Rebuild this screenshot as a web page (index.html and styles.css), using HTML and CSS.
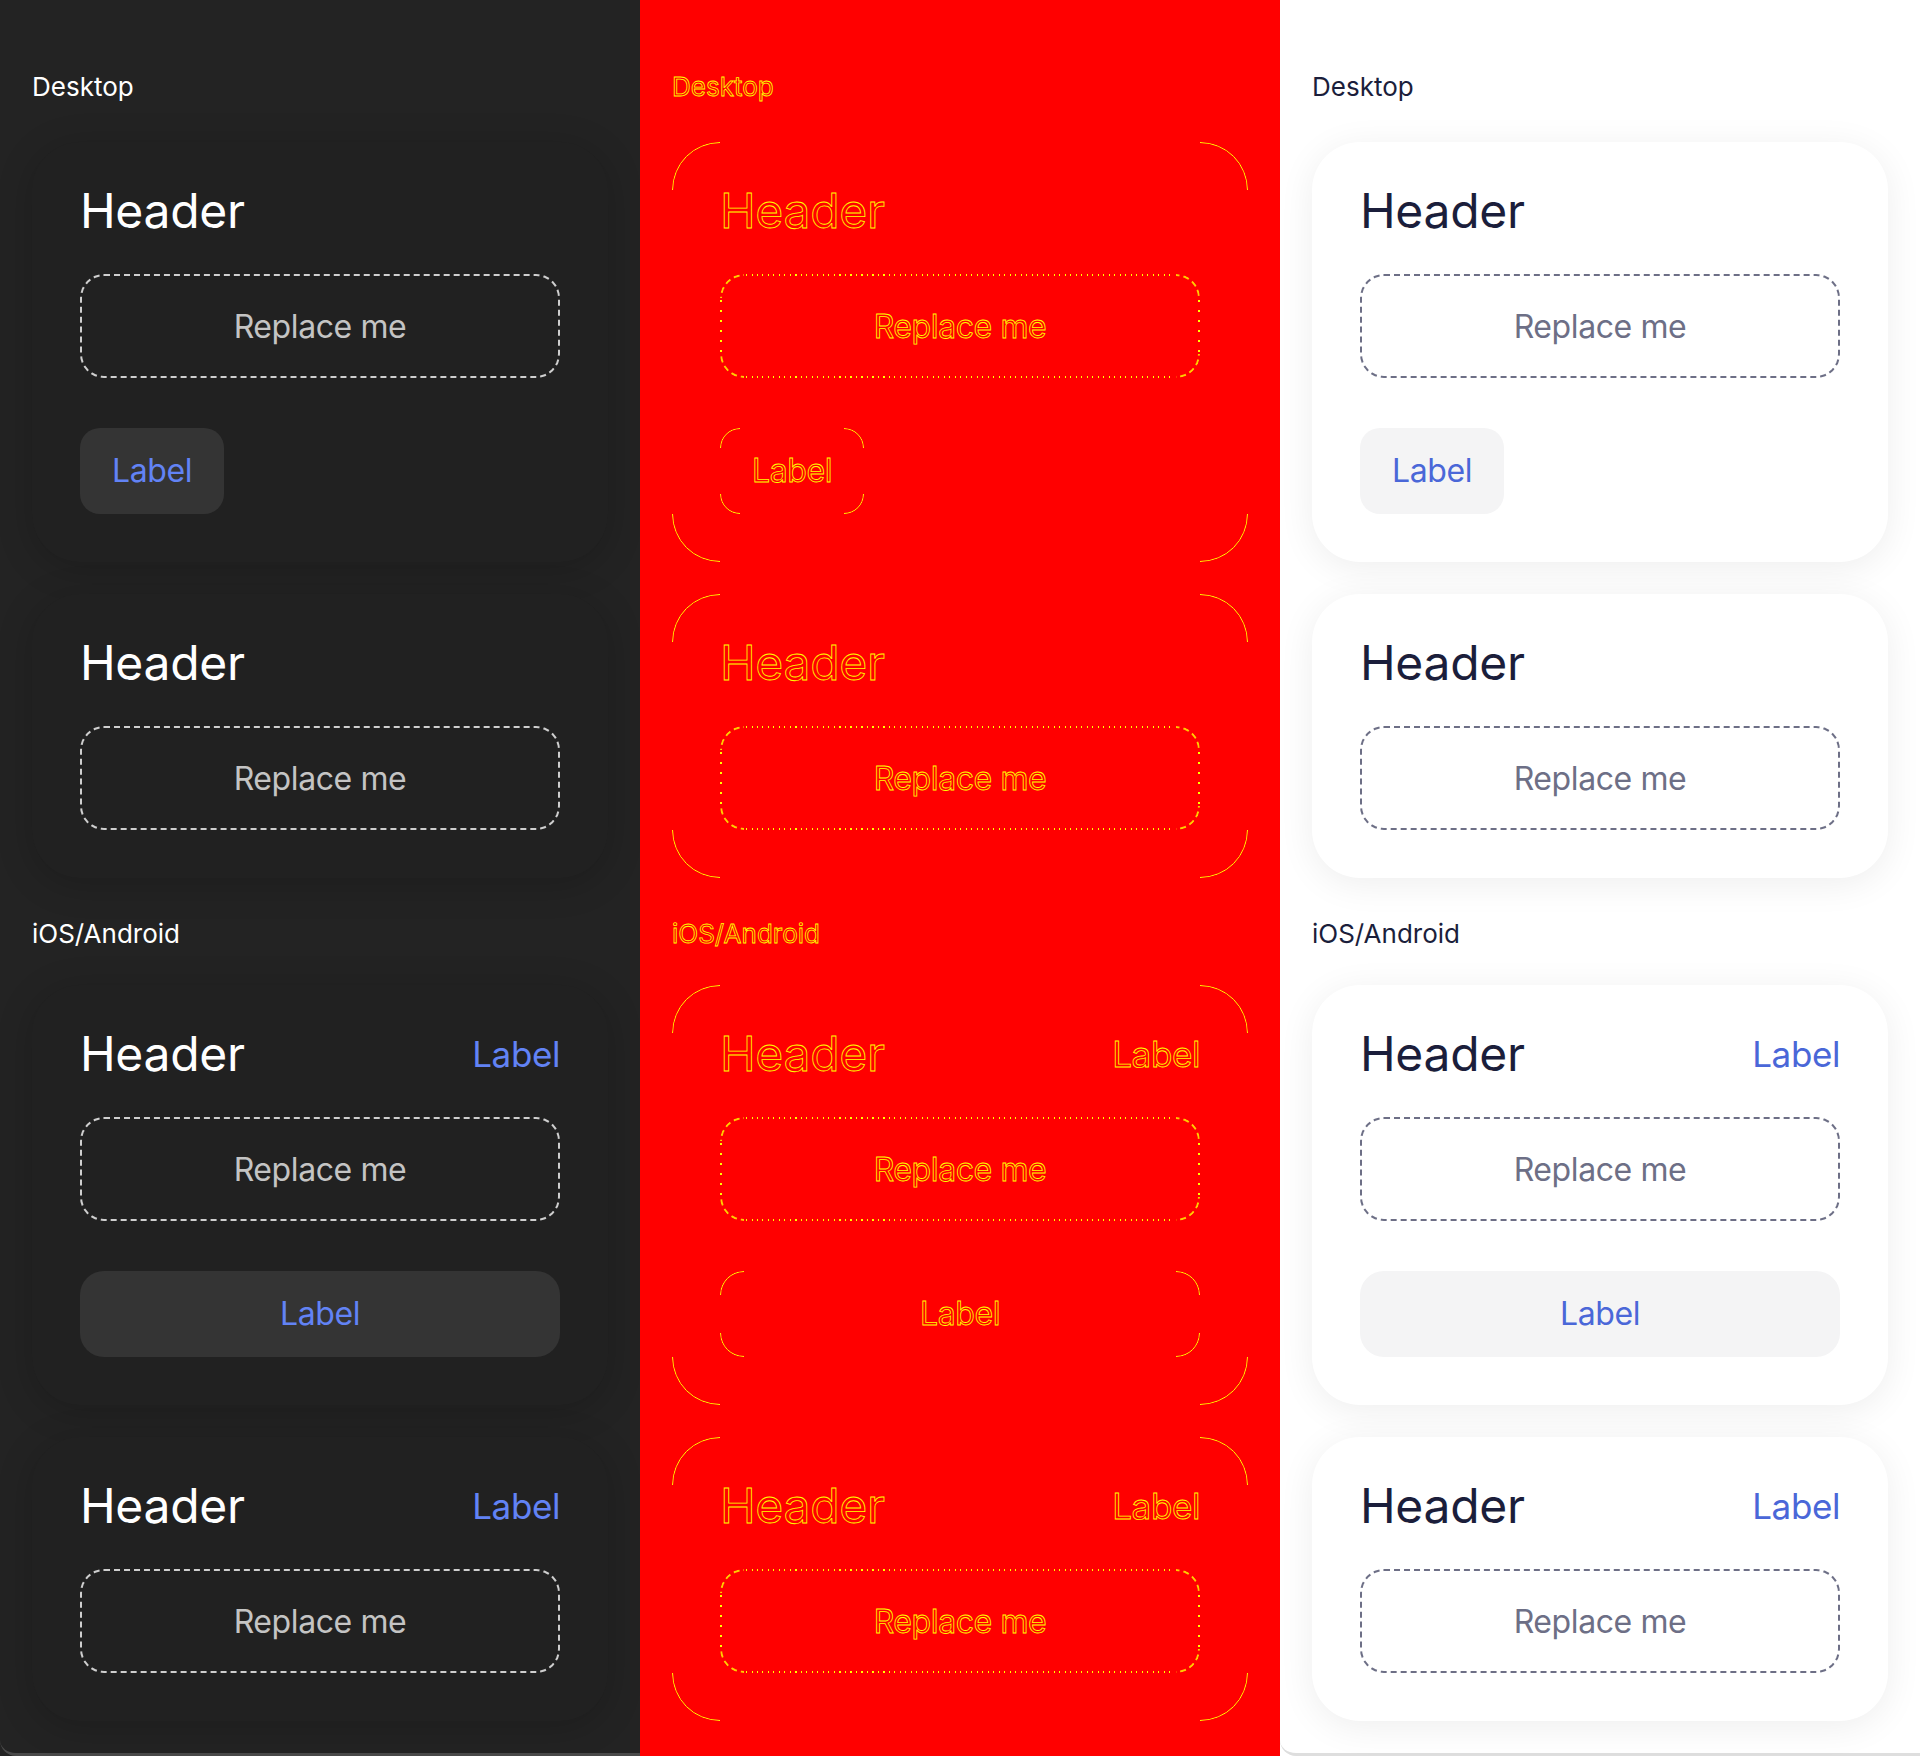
FILE: index.html
```html
<!DOCTYPE html>
<html lang="en">
<head>
<meta charset="utf-8">
<title>Cards</title>
<link rel="stylesheet" href="styles.css">
</head>
<body>
<div class="page">
  <div class="col col-dark">
    <div class="panel">
      <section class="section">
        <div class="section-title">Desktop</div>
        <div class="card">
          <div class="card-head"><span class="card-title">Header</span></div>
          <div class="slot"><span>Replace me</span></div>
          <div class="btn"><span>Label</span></div>
        </div>
        <div class="card">
          <div class="card-head"><span class="card-title">Header</span></div>
          <div class="slot"><span>Replace me</span></div>
        </div>
      </section>
      <section class="section section-mobile">
        <div class="section-title">iOS/Android</div>
        <div class="card">
          <div class="card-head"><span class="card-title">Header</span><span class="link">Label</span></div>
          <div class="slot"><span>Replace me</span></div>
          <div class="btn btn-wide"><span>Label</span></div>
        </div>
        <div class="card">
          <div class="card-head"><span class="card-title">Header</span><span class="link">Label</span></div>
          <div class="slot"><span>Replace me</span></div>
        </div>
      </section>
    </div>
  </div>

  <div class="col col-red">
    <div class="panel">
      <section class="section">
        <div class="section-title">Desktop</div>
        <div class="card">
          <div class="card-head"><span class="card-title">Header</span></div>
          <div class="slot"><span>Replace me</span></div>
          <div class="btn"><span>Label</span></div>
        </div>
        <div class="card">
          <div class="card-head"><span class="card-title">Header</span></div>
          <div class="slot"><span>Replace me</span></div>
        </div>
      </section>
      <section class="section section-mobile">
        <div class="section-title">iOS/Android</div>
        <div class="card">
          <div class="card-head"><span class="card-title">Header</span><span class="link">Label</span></div>
          <div class="slot"><span>Replace me</span></div>
          <div class="btn btn-wide"><span>Label</span></div>
        </div>
        <div class="card">
          <div class="card-head"><span class="card-title">Header</span><span class="link">Label</span></div>
          <div class="slot"><span>Replace me</span></div>
        </div>
      </section>
    </div>
  </div>

  <div class="col col-light">
    <div class="panel">
      <section class="section">
        <div class="section-title">Desktop</div>
        <div class="card">
          <div class="card-head"><span class="card-title">Header</span></div>
          <div class="slot"><span>Replace me</span></div>
          <div class="btn"><span>Label</span></div>
        </div>
        <div class="card">
          <div class="card-head"><span class="card-title">Header</span></div>
          <div class="slot"><span>Replace me</span></div>
        </div>
      </section>
      <section class="section section-mobile">
        <div class="section-title">iOS/Android</div>
        <div class="card">
          <div class="card-head"><span class="card-title">Header</span><span class="link">Label</span></div>
          <div class="slot"><span>Replace me</span></div>
          <div class="btn btn-wide"><span>Label</span></div>
        </div>
        <div class="card">
          <div class="card-head"><span class="card-title">Header</span><span class="link">Label</span></div>
          <div class="slot"><span>Replace me</span></div>
        </div>
      </section>
    </div>
  </div>
</div>
</body>
</html>
```

FILE: styles.css
```css
* { box-sizing: border-box; }

html, body {
  margin: 0;
  padding: 0;
}

body {
  width: 1920px;
  height: 1756px;
  overflow: hidden;
  font-family: Inter, "Noto Sans", sans-serif;
  background: #e6e6e6;
}

.page {
  display: grid;
  grid-template-columns: repeat(3, 640px);
  height: 1756px;
}

.col {
  height: 1756px;
}

.panel {
  height: 1756px;
  padding: 71px 32px 0;
  display: flex;
  flex-direction: column;
  gap: 40px;
  border-bottom: 3px solid transparent;
  border-bottom-left-radius: 16px;
}

.section {
  display: flex;
  flex-direction: column;
  gap: 32px;
}

.section-title {
  font-size: 26px;
  line-height: 32px;
  margin-bottom: 7px;
}

.section-mobile .section-title {
  margin-bottom: 3px;
}

.card {
  border-radius: 48px;
  padding: 40px 48px 48px;
  display: flex;
  flex-direction: column;
}

.card-head {
  display: flex;
  justify-content: space-between;
  align-items: center;
  height: 58px;
}

.card-title {
  font-size: 48px;
  line-height: 58px;
  letter-spacing: -0.3px;
}

.link {
  font-size: 35px;
  line-height: 42px;
  letter-spacing: -0.4px;
}

.slot {
  position: relative;
  margin-top: 34px;
  height: 104px;
  border: 2px dashed;
  border-radius: 24px;
  display: flex;
  align-items: center;
  justify-content: center;
  font-size: 32px;
  letter-spacing: -0.4px;
}

.btn {
  position: relative;
  margin-top: 50px;
  align-self: flex-start;
  padding: 24px 32px;
  border-radius: 20px;
  font-size: 32px;
  line-height: 38px;
  letter-spacing: -0.4px;
}

.btn-wide {
  align-self: stretch;
  text-align: center;
  border-radius: 24px;
}

/* ---------- dark ---------- */
.col-dark { background: #232323; }
.col-dark .panel {
  background: #232323;
  border-bottom-color: #4a4a4a;
}
.col-dark .section-title { color: #ffffff; }
.col-dark .card {
  background: #212121;
  box-shadow: 0 6px 36px rgba(0, 0, 0, 0.18);
}
.col-dark .card-title { color: #ffffff; }
.col-dark .link { color: #6283f5; }
.col-dark .slot {
  border-color: #cfcfcf;
  color: #c4c4c4;
}
.col-dark .btn {
  background: #343434;
  color: #6283f5;
}

/* ---------- red outline ---------- */
.col-red { background: #ff0000; }
.col-red .panel {
  background: #ff0000;
  border-bottom-color: #ff0000;
}
.col-red .section-title,
.col-red .card-title,
.col-red .link,
.col-red .slot,
.col-red .btn {
  color: transparent;
  -webkit-text-stroke: 0.8px #ffff00;
}
.col-red .card {
  position: relative;
  background: transparent;
}
.col-red .card::before,
.col-red .btn::before,
.col-red .slot::before {
  content: "";
  position: absolute;
  inset: 0;
  border: 1px solid #ffff00;
  border-radius: inherit;
  -webkit-mask:
    linear-gradient(#000 0 0) left top / var(--r) var(--r) no-repeat,
    linear-gradient(#000 0 0) right top / var(--r) var(--r) no-repeat,
    linear-gradient(#000 0 0) left bottom / var(--r) var(--r) no-repeat,
    linear-gradient(#000 0 0) right bottom / var(--r) var(--r) no-repeat;
  mask:
    linear-gradient(#000 0 0) left top / var(--r) var(--r) no-repeat,
    linear-gradient(#000 0 0) right top / var(--r) var(--r) no-repeat,
    linear-gradient(#000 0 0) left bottom / var(--r) var(--r) no-repeat,
    linear-gradient(#000 0 0) right bottom / var(--r) var(--r) no-repeat;
}
.col-red .card { --r: 48px; }
.col-red .btn { --r: 20px; background: transparent; }
.col-red .btn-wide { --r: 24px; }
.col-red .slot {
  --r: 24px;
  border-color: transparent;
  background:
    repeating-linear-gradient(90deg, #ffff00 0 1px, transparent 1px 5.5px) center top / calc(100% - 52px) 2px no-repeat,
    repeating-linear-gradient(90deg, #ffff00 0 1px, transparent 1px 5.5px) center bottom / calc(100% - 52px) 2px no-repeat,
    repeating-linear-gradient(180deg, #ffff00 0 2px, transparent 2px 10px) left center / 2px calc(100% - 52px) no-repeat,
    repeating-linear-gradient(180deg, #ffff00 0 2px, transparent 2px 10px) right center / 2px calc(100% - 52px) no-repeat;
  background-origin: border-box;
}
.col-red .slot::before {
  inset: -2px;
  border: 2px dashed #ffff00;
  opacity: 0.8;
}

/* ---------- light ---------- */
.col-light { background: #ffffff; }
.col-light .panel {
  background: #ffffff;
  border-bottom-color: #dedede;
}
.col-light .section-title { color: #1b1e3b; }
.col-light .card {
  background: #ffffff;
  box-shadow: 0 6px 36px rgba(0, 0, 0, 0.07);
}
.col-light .card-title { color: #1b1e3b; }
.col-light .link { color: #4a67d8; }
.col-light .slot {
  border-color: #6d6f86;
  color: #6d6f86;
}
.col-light .btn {
  background: #f4f4f5;
  color: #4a67d8;
}
```
